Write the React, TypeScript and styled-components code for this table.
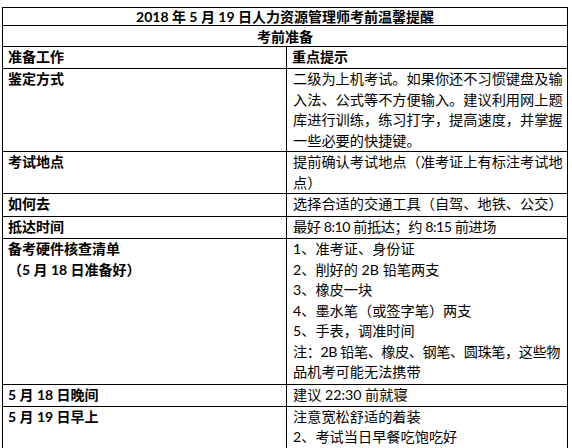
import React from 'react'
import styled, { createGlobalStyle } from 'styled-components'

interface TipRow {
  label: string[]
  tips: string[]
  height: number
}

const rows: TipRow[] = [
  {
    label: ['鉴定方式'],
    tips: [
      '二级为上机考试。如果你还不习惯键盘及输',
      '入法、公式等不方便输入。建议利用网上题',
      '库进行训练，练习打字，提高速度，并掌握',
      '一些必要的快捷键。',
    ],
    height: 82,
  },
  {
    label: ['考试地点'],
    tips: ['提前确认考试地点（准考证上有标注考试地', '点）'],
    height: 42,
  },
  { label: ['如何去'], tips: ['选择合适的交通工具（自驾、地铁、公交）'], height: 23 },
  { label: ['抵达时间'], tips: ['最好 8:10 前抵达；约 8:15 前进场'], height: 22 },
  {
    label: ['备考硬件核查清单', '（5 月 18 日准备好）'],
    tips: [
      '1、准考证、身份证',
      '2、削好的 2B 铅笔两支',
      '3、橡皮一块',
      '4、墨水笔（或签字笔）两支',
      '5、手表，调准时间',
      '注：2B 铅笔、橡皮、钢笔、圆珠笔，这些物',
      '品机考可能无法携带',
    ],
    height: 146,
  },
  { label: ['5 月 18 日晚间'], tips: ['建议 22:30 前就寝'], height: 20 },
  {
    label: ['5 月 19 日早上'],
    tips: ['注意宽松舒适的着装', '2、考试当日早餐吃饱吃好'],
    height: 43,
  },
]

const GlobalStyle = createGlobalStyle`
  html, body {
    margin: 0;
    padding: 0;
    background: #ffffff;
  }
  body {
    font-family: 'Lato', 'Noto Sans CJK SC', sans-serif;
    color: #000000;
  }
`

const Page = styled.div`
  padding: 7px 0 0 2px;
`

const Sheet = styled.table`
  border-collapse: collapse;
  table-layout: fixed;
  width: 565px;
`

const Row = styled.tr<{ $h: number }>`
  height: ${({ $h }) => $h}px;
`

const Cell = styled.td`
  border: 1px solid #000000;
  padding: 0 0 0 6px;
  vertical-align: top;
  font-size: 14.2px;
  line-height: 20.5px;
  white-space: nowrap;
  overflow: hidden;
`

const TitleCell = styled(Cell)`
  padding: 0;
  text-align: center;
  vertical-align: middle;
  font-weight: 700;
  font-size: 14px;
  line-height: 17px;
`

const HeadCell = styled(Cell)`
  font-weight: 700;
  font-size: 14px;
  padding-left: 5px;
`

const LabelCell = styled(Cell)`
  font-weight: 700;
  font-size: 14px;
  padding-left: 5px;
`

// long lines that carry latin runs are set a touch tighter so they fit like the original
const Line = styled.div<{ $tight?: boolean }>`
  letter-spacing: ${({ $tight }) => ($tight ? '-0.45px' : '0')};
`

const App: React.FC = () => {
  return (
    <Page>
      <GlobalStyle />
      <Sheet>
        <colgroup>
          <col style={{ width: 284 }} />
          <col style={{ width: 281 }} />
        </colgroup>
        <tbody>
          <Row $h={18}>
            <TitleCell colSpan={2}>2018 年 5 月 19 日人力资源管理师考前温馨提醒</TitleCell>
          </Row>
          <Row $h={21}>
            <TitleCell colSpan={2}>考前准备</TitleCell>
          </Row>
          <Row $h={22}>
            <HeadCell>准备工作</HeadCell>
            <HeadCell>重点提示</HeadCell>
          </Row>
          {rows.map(row => (
            <Row key={row.label[0]} $h={row.height}>
              <LabelCell>
                {row.label.map(text => (
                  <Line key={text}>{text}</Line>
                ))}
              </LabelCell>
              <Cell>
                {row.tips.map(text => (
                  <Line key={text} $tight={text.length > 20}>
                    {text}
                  </Line>
                ))}
              </Cell>
            </Row>
          ))}
        </tbody>
      </Sheet>
    </Page>
  )
}

export default App
